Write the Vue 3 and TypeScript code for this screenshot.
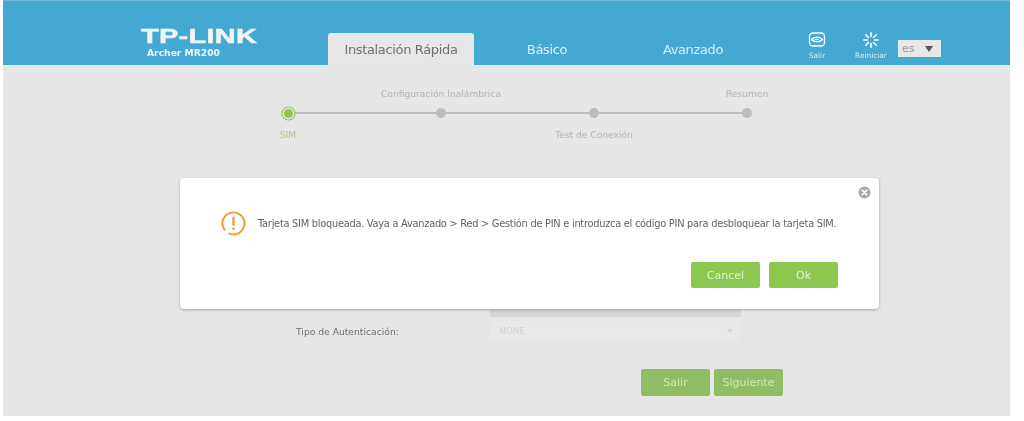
<script setup lang="ts">
const tabs: { label: string; active?: boolean }[] = [
  { label: 'Instalación Rápida', active: true },
  { label: 'Básico' },
  { label: 'Avanzado' },
]
const rays: number[] = [0, 45, 90, 135, 180, 225, 270, 315]
const steps: { label: string; pos: 'top' | 'bottom'; active?: boolean }[] = [
  { label: 'SIM', pos: 'bottom', active: true },
  { label: 'Configuración Inalámbrica', pos: 'top' },
  { label: 'Test de Conexión', pos: 'bottom' },
  { label: 'Resumen', pos: 'top' },
]
</script>

<template>
  <div class="page">
    <header class="header">
      <div class="brand">
        <div class="logo">TP-LINK</div>
        <div class="model">Archer MR200</div>
      </div>
      <nav class="tabs">
        <div v-for="t in tabs" :key="t.label" class="tab" :class="{ active: t.active }">{{ t.label }}</div>
      </nav>
      <div class="tools">
        <div class="tool salir">
          <svg width="18" height="15" viewBox="0 0 18 15" fill="none" stroke="#fff" stroke-width="1.3">
            <rect x="1.5" y="1" width="15" height="13" rx="3.5" />
            <path d="M3.5 7.5C6 4.4 12 4.4 14.5 7.5C12 10.6 6 10.6 3.5 7.5Z" />
            <path d="M6.5 7.5H11" />
          </svg>
          <span>Salir</span>
        </div>
        <div class="tool reiniciar">
          <svg width="18" height="16" viewBox="0 0 18 16" stroke="#fff" stroke-width="1.6" stroke-linecap="round">
            <path v-for="r in rays" :key="r" d="M9 0.8V4.4" :transform="`rotate(${r} 9 8)`" />
          </svg>
          <span>Reiniciar</span>
        </div>
        <div class="lang"><span>es</span><i class="caret"></i></div>
      </div>
    </header>

    <main class="content">
      <div class="wizard">
        <div v-for="s in steps" :key="s.label" class="step" :class="{ active: s.active }">
          <div class="step-label">{{ s.pos === 'top' ? s.label : '' }}</div>
          <div class="dot"></div>
          <div class="step-label">{{ s.pos === 'bottom' ? s.label : '' }}</div>
        </div>
      </div>

      <form class="form" @submit.prevent>
        <div class="field-row">
          <span class="field-label"></span>
          <div class="ghost-input"></div>
        </div>
        <div class="field-row auth">
          <span class="field-label">Tipo de Autenticación:</span>
          <div class="ghost-select"><span>NONE</span><i class="caret faint"></i></div>
        </div>
        <div class="form-actions">
          <button type="button" class="btn dim">Salir</button>
          <button type="button" class="btn dim">Siguiente</button>
        </div>
      </form>

      <section class="modal">
        <svg class="close" width="13" height="13" viewBox="0 0 13 13">
          <circle cx="6.5" cy="6.5" r="6" fill="#a9a9a9" />
          <path d="M4.2 4.2L8.8 8.8M8.8 4.2L4.2 8.8" stroke="#fff" stroke-width="1.6" stroke-linecap="round" />
        </svg>
        <div class="message">
          <svg class="warn" width="25" height="25" viewBox="0 0 25 25" fill="none">
            <path d="M8.2 22.6A11 11 0 1 0 3.6 19" stroke="#f1982c" stroke-width="1.9" stroke-linecap="round" />
            <path d="M12.5 6.8V14" stroke="#f1982c" stroke-width="2.2" stroke-linecap="round" />
            <circle cx="12.5" cy="17.6" r="1.3" fill="#f1982c" />
          </svg>
          <p>Tarjeta SIM bloqueada. Vaya a Avanzado &gt; Red &gt; Gestión de PIN e introduzca el código PIN para desbloquear la tarjeta SIM.</p>
        </div>
        <div class="modal-actions">
          <button type="button" class="btn">Cancel</button>
          <button type="button" class="btn">Ok</button>
        </div>
      </section>
    </main>
  </div>
</template>

<style>
html, body { background: #fff; }
</style>

<style scoped>
.page {
  width: 1007px;
  margin-left: 3px;
  font-family: "DejaVu Sans", Verdana, sans-serif;
  filter: blur(0.45px);
}
.header {
  height: 65px;
  box-sizing: border-box;
  border-top: 1px solid #6db9d9;
  background: #43a9d3;
  display: flex;
  align-items: flex-end;
  padding-left: 138px;
}
.brand {
  width: 187px;
  align-self: flex-start;
  padding-top: 25px;
  color: #fff;
}
.logo {
  font-family: "Liberation Sans", Arial, sans-serif;
  font-weight: 700;
  font-size: 21px;
  line-height: 20px;
  letter-spacing: 0.2px;
  -webkit-text-stroke: 0.5px #f1f4f5;
  transform: scaleX(1.38);
  transform-origin: left center;
  color: #f1f4f5;
}
.model {
  margin: 1px 0 0 6px;
  font-size: 9.2px;
  line-height: 12px;
  font-weight: 700;
  color: #eef5f8;
}
.tabs { display: flex; }
.tab {
  width: 146px;
  height: 32px;
  line-height: 33px;
  text-align: center;
  font-size: 13px;
  letter-spacing: -0.35px;
  color: #d9eff8;
}
.tab.active {
  width: 146px;
  background: #e7e7e7;
  color: #707070;
  border-radius: 3px 3px 0 0;
}
.tools {
  display: flex;
  align-items: flex-start;
  align-self: flex-start;
  padding-top: 31px;
  margin-left: 36px;
}
.tool {
  display: flex;
  flex-direction: column;
  align-items: center;
  color: #d9eff8;
  font-size: 7.4px;
  line-height: 9px;
}
.tool span { margin-top: 4px; }
.tool.reiniciar span { margin-top: 3px; }
.salir { width: 30px; }
.reiniciar { width: 38px; margin-left: 20px; }
.lang {
  margin: 8px 0 0 8px;
  width: 43px;
  height: 17px;
  box-sizing: border-box;
  background: #e7e7e7;
  color: #999;
  font-size: 11px;
  line-height: 16px;
  padding: 0 8px 0 4px;
  display: flex;
  align-items: center;
  justify-content: space-between;
}
.caret {
  width: 0;
  height: 0;
  border-left: 4px solid transparent;
  border-right: 4px solid transparent;
  border-top: 6px solid #555;
}
.caret.faint { border-top-color: #d4d4d4; border-left-width: 3px; border-right-width: 3px; border-top-width: 4px; }

.content {
  position: relative;
  height: 351px;
  background: #e6e6e6;
  overflow: hidden;
}
.wizard {
  position: relative;
  width: 612px;
  margin-left: 208.5px;
  padding-top: 22px;
  display: grid;
  grid-template-columns: repeat(4, 153px);
}
.wizard::before {
  content: "";
  position: absolute;
  left: 76px;
  right: 76px;
  top: 47px;
  height: 2px;
  background: #bcbcbc;
}
.step {
  display: flex;
  flex-direction: column;
  align-items: center;
  position: relative;
}
.step-label {
  height: 14px;
  line-height: 14px;
  font-size: 9.15px;
  color: #b4b4b4;
  white-space: nowrap;
}
.dot {
  width: 10px;
  height: 10px;
  margin: 7px 0 10px;
  border-radius: 50%;
  background: #bcbcbc;
}
.step.active .dot {
  width: 9px;
  height: 9px;
  margin: 7.5px 0 10.5px;
  background: #92c455;
  box-shadow: 0 0 0 1.5px #e6e6e6, 0 0 0 2.6px #92c455;
}
.step.active .step-label { color: #a9c989; }

.form {
  margin-top: 155px;
  padding-left: 293px;
}
.field-row {
  display: flex;
  align-items: center;
  height: 20px;
}
.field-label {
  width: 194px;
  flex: none;
  font-size: 9.2px;
  color: #6f6f6f;
}
.ghost-input {
  width: 251px;
  height: 12px;
  align-self: flex-end;
  background: #d6d6d6;
  border-radius: 2px;
}
.field-row.auth { margin-top: 4px; }
.ghost-select {
  width: 250px;
  height: 20px;
  box-sizing: border-box;
  background: #e9e9e9;
  color: #d2d2d2;
  font-size: 9px;
  padding: 0 7px 0 9px;
  display: flex;
  align-items: center;
  justify-content: space-between;
}
.form-actions {
  display: flex;
  gap: 4px;
  margin: 28px 0 0 345px;
}
.btn {
  width: 69px;
  height: 26px;
  padding: 0;
  border: 0;
  border-radius: 2px;
  background: #8cc850;
  color: #e6f3d8;
  font-family: inherit;
  font-size: 11px;
}
.btn.dim {
  height: 27px;
  background: #8fbd63;
  color: #d0e6ba;
}

.modal {
  position: absolute;
  left: 177px;
  top: 113px;
  width: 699px;
  height: 131px;
  box-sizing: border-box;
  background: #fff;
  border-radius: 4px;
  box-shadow: 0 1px 3px rgba(0, 0, 0, 0.28);
  padding: 33px 41px 0 41px;
}
.close {
  position: absolute;
  right: 8px;
  top: 8px;
}
.message {
  display: flex;
  align-items: center;
  gap: 12px;
}
.warn { flex: none; }
.message p {
  margin: 0;
  font-size: 9.8px;
  letter-spacing: -0.25px;
  line-height: 25px;
  color: #626262;
  white-space: nowrap;
}
.modal-actions {
  display: flex;
  justify-content: flex-end;
  gap: 9px;
  margin-top: 26px;
}
</style>
